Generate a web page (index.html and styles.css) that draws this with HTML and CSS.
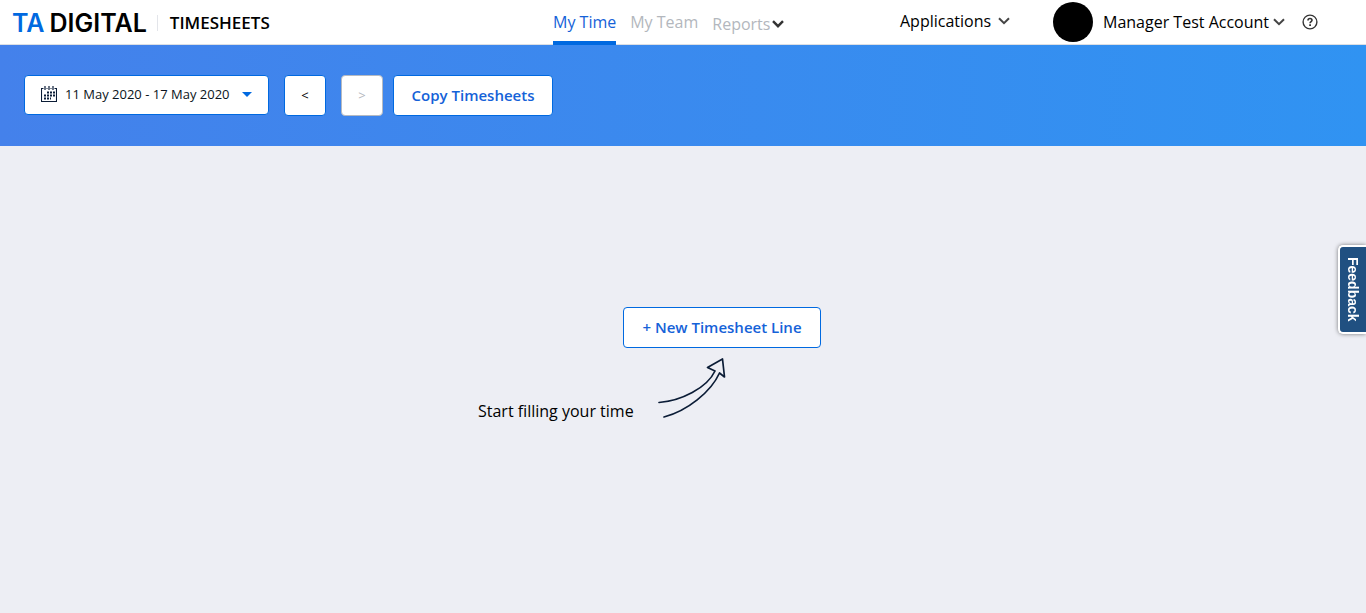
FILE: index.html
```html
<!DOCTYPE html>
<html lang="en">
<head>
<meta charset="utf-8">
<meta name="viewport" content="width=device-width, initial-scale=1">
<title>Timesheets</title>
<link rel="stylesheet" href="styles.css">
</head>
<body>
<header class="header">
  <div class="brand">
    <a class="logo" href="#"><span class="logo-ta">TA</span><span class="logo-digital">DIGITAL</span></a>
    <span class="product">TIMESHEETS</span>
  </div>
  <nav class="nav">
    <a class="nav-link active" href="#">My Time</a>
    <a class="nav-link" href="#">My Team</a>
    <button class="nav-link nav-menu" type="button">Reports
      <svg class="chevron-bold" viewBox="0 0 12 8" width="12" height="8"><path d="M1 1.200 6 6.200l5-5" fill="none" stroke="currentColor" stroke-width="2.4"/></svg>
    </button>
  </nav>
  <div class="account">
    <button class="menu apps" type="button">Applications
      <svg viewBox="0 0 12 8" width="12" height="8"><path d="M1 1.2 6 6.2l5-5" fill="none" stroke="#444" stroke-width="2"/></svg>
    </button>
    <div class="user">
      <span class="avatar"></span>
      <button class="menu user-name" type="button">Manager Test Account
        <svg viewBox="0 0 12 8" width="12" height="8"><path d="M1 1.2 6 6.2l5-5" fill="none" stroke="#444" stroke-width="2"/></svg>
      </button>
      <button class="help" type="button" aria-label="Help">
        <svg viewBox="0 0 16 16" width="16" height="16" fill="none" stroke="#333"><circle cx="8" cy="8" r="6.9" stroke-width="1.4"/><path d="M6 6.4C6 5.1 6.8 4.5 8 4.5s2 .7 2 1.8C10 7.6 8.1 7.7 8.1 9.2" stroke-width="1.6"/><path d="M8.1 10.3v1.6" stroke-width="1.8"/></svg>
      </button>
    </div>
  </div>
</header>
<div class="toolbar">
  <button class="btn range" type="button">
    <svg viewBox="0 0 16 16" width="16" height="16" fill="none" stroke="#0b1c36"><path d="M2.500 2.500h-2v13h15v-13h-2M5.500 2.500h1M9.500 2.500h1" stroke-width="1.1"/><path d="M4 0v4M8 0v4M12 0v4" stroke-width="1.2"/><path d="M6 6.500h8M3 9.500h11M3 12.500h7" stroke-width="2" stroke-dasharray="2 1"/></svg>
    <span>11 May 2020 - 17 May 2020</span>
    <svg class="caret" viewBox="0 0 10 5" width="10" height="5"><path d="M0 0h10L5 5z" fill="#0069e0"/></svg>
  </button>
  <button class="btn step" type="button" aria-label="Previous week">&lt;</button>
  <button class="btn step" type="button" aria-label="Next week" disabled>&gt;</button>
  <button class="btn action copy" type="button">Copy Timesheets</button>
</div>
<main class="content">
  <div class="empty">
    <button class="btn action new-line" type="button">+ New Timesheet Line</button>
    <div class="hint">
      <p class="hint-text">Start filling your time</p>
      <svg class="arrow" viewBox="0 0 68 60" width="68" height="60" fill="none" stroke="#0b1c36" stroke-width="1.7" stroke-linejoin="round" stroke-linecap="round"><path d="M1 44.500C23 43 49 30 57 13L49.500 9.500 64.500 1 66.500 19 61.500 15C53 34 29 53 6 59"/></svg>
    </div>
  </div>
</main>
<button class="feedback" type="button">Feedback</button>
</body>
</html>
```
FILE: styles.css
```css
* { box-sizing: border-box; }
body {
  margin: 0;
  min-height: 100vh;
  background: #edeef4;
  color: #000;
  font: 16px/24px "Open Sans", "Noto Sans", sans-serif;
}
button {
  padding: 0;
  border: 0;
  background: none;
  color: inherit;
  font: inherit;
  white-space: nowrap;
  cursor: pointer;
}
a { color: inherit; text-decoration: none; }
svg { flex: none; }

.header {
  display: grid;
  grid-template-columns: 553fr 347fr 466fr;
  height: 45px;
  border-bottom: 1px solid #dcdfe4;
  background: #fff;
}
.brand { display: flex; align-items: center; padding-left: 12px; }
.logo {
  display: flex;
  gap: 5px;
  font: 600 25px/24px Inter, sans-serif;
}
.logo-ta { color: #0069e0; }
.product {
  margin-left: 10px;
  padding-left: 12px;
  border-left: 1px solid #e3e5ea;
  font-size: 17px;
  font-weight: 600;
  line-height: 16px;
}
.nav { display: flex; gap: 14px; height: 45px; }
.nav-link { padding-top: 10px; color: #b3b7bd; white-space: nowrap; }
.nav-link.active { border-bottom: 4px solid #0069e0; color: #1562d8; }
.nav-menu { display: flex; align-items: center; gap: 2px; padding-top: 2px; }
.chevron-bold { color: #333; }

.account { display: flex; align-items: center; }
.menu { display: flex; align-items: center; gap: 8px; }
.apps { padding-bottom: 4px; width: 153px; gap: 6px; }
.apps svg { margin-left: 1px; }
.user { display: flex; align-items: center; padding-bottom: 2px; }
.user-name { gap: 4px; }
.avatar { flex: none; width: 40px; height: 40px; margin-right: 10px; border-radius: 50%; background: #000; }
.help { display: flex; margin-left: 17px; }

.toolbar {
  display: flex;
  align-items: flex-start;
  padding: 30px 24px;
  background: linear-gradient(90deg, #4481eb, #3093f2);
}
.btn {
  height: 41px;
  padding-bottom: 2px;
  border: 1px solid #0069e0;
  border-radius: 4px;
  background: #fff;
}
.range {
  display: flex;
  align-items: center;
  gap: 8px;
  width: 245px;
  height: 40px;
  padding: 0 16px 2px;
  color: #0b1420;
  font-size: 13px;
}
.caret { margin-left: auto; }
.step { width: 42px; margin-left: 15px; font-size: 13px; }
.step:disabled { border-color: #b5bac2; color: #b3b7bd; }
.action { color: #1562d8; font-weight: 600; font-size: 15px; }
.copy { width: 160px; margin-left: 10px; }

.content { padding: 161px 16px 16px; }
.empty { width: 410px; max-width: 100%; margin: 0 auto; }
.new-line { width: 198px; margin-left: 145px; }
.hint { display: flex; align-items: flex-end; margin-top: 10px; }
.hint-text { width: 180px; margin: 0; line-height: 14px; }

.feedback {
  position: fixed;
  top: 245px;
  right: 0;
  padding: 10px 4px;
  border: 2px solid #fff;
  border-right: 0;
  border-radius: 5px 0 0 5px;
  background: #205081;
  box-shadow: 0 0 4px rgba(0, 0, 0, .5);
  color: #fff;
  font: 700 14px/18px "Liberation Sans", sans-serif;
  writing-mode: vertical-rl;
}
```
